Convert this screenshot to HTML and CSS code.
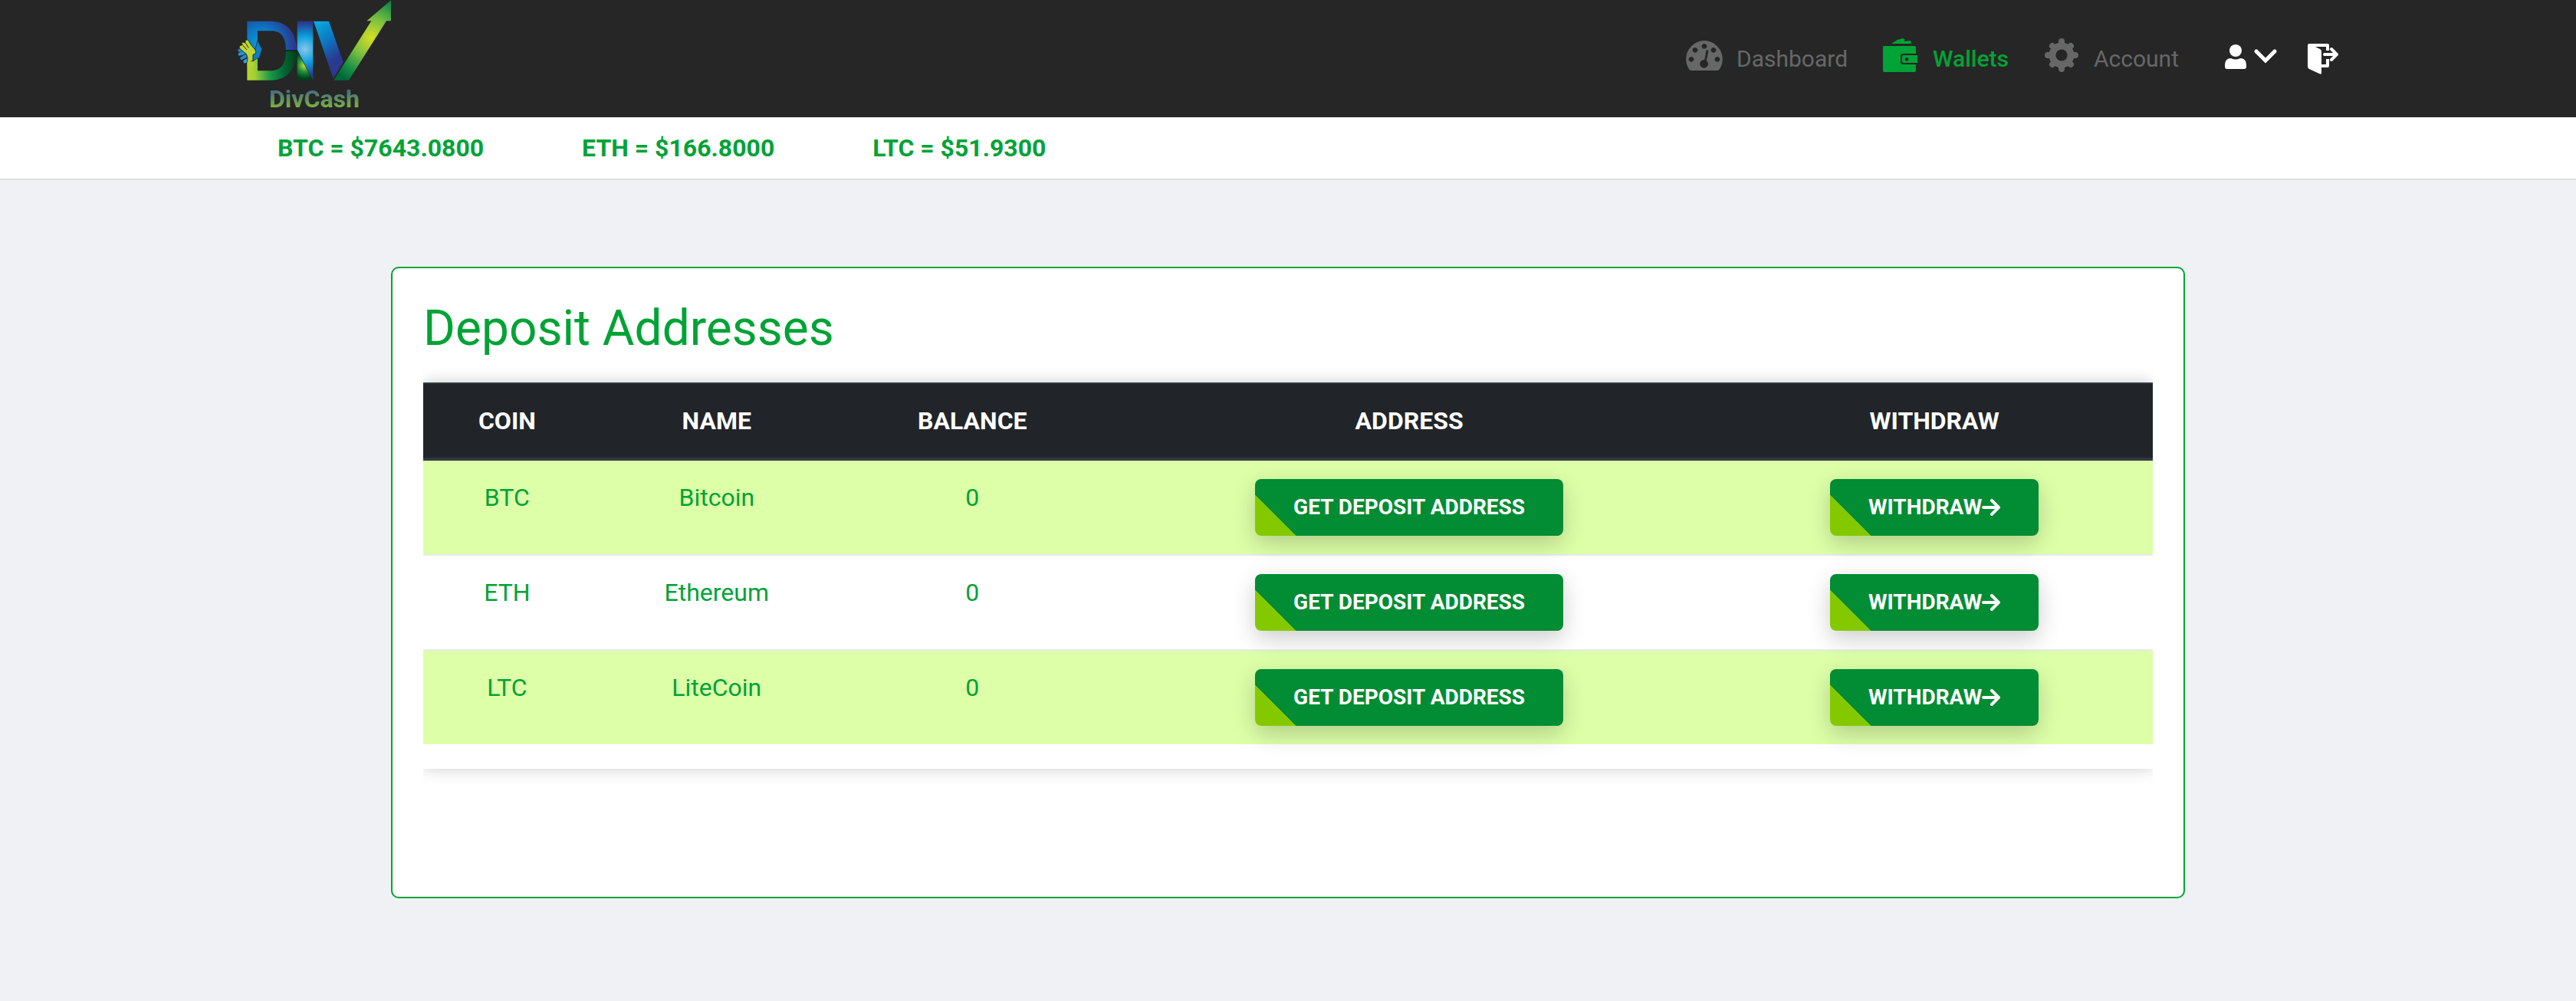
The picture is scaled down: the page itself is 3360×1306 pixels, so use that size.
FILE: index.html
```html
<!DOCTYPE html>
<html lang="en">
<head>
<meta charset="utf-8">
<title>DivCash - Wallets</title>
<link rel="stylesheet" href="styles.css">
</head>
<body>
<svg class="sprite" aria-hidden="true">
  <symbol id="arrow" viewBox="0 0 24 24">
    <path d="M2 12H21M13 3L22 12L13 21" fill="none" stroke="currentColor" stroke-width="4" stroke-linecap="round" stroke-linejoin="miter"/>
  </symbol>
</svg>

<header class="header">
  <div class="container header-row">
    <a class="logo" href="#" aria-label="DivCash">
      <svg viewBox="60 0 600 459" width="200" height="153" aria-hidden="true">
        <defs>
          <radialGradient id="dTop" gradientUnits="userSpaceOnUse" cx="150" cy="175" r="130">
            <stop offset="0" stop-color="#0b9ddb"/><stop offset=".5" stop-color="#0c78c4"/><stop offset="1" stop-color="#2b3990"/>
          </radialGradient>
          <linearGradient id="dBottom" gradientUnits="userSpaceOnUse" x1="97" y1="260" x2="290" y2="250">
            <stop offset="0" stop-color="#b8d532"/><stop offset=".15" stop-color="#a0cf38"/><stop offset=".45" stop-color="#1c9a48"/><stop offset=".75" stop-color="#006634"/><stop offset="1" stop-color="#00401b"/>
          </linearGradient>
          <radialGradient id="iTop" gradientUnits="userSpaceOnUse" cx="323" cy="193" r="105">
            <stop offset="0" stop-color="#8ac6ee"/><stop offset=".5" stop-color="#0a9fdc"/><stop offset="1" stop-color="#2b3990"/>
          </radialGradient>
          <radialGradient id="iBottom" gradientUnits="userSpaceOnUse" cx="322" cy="256" r="52">
            <stop offset="0" stop-color="#d7df23"/><stop offset=".5" stop-color="#1c8f3e"/><stop offset="1" stop-color="#00401b"/>
          </radialGradient>
          <linearGradient id="vLeft" x1=".2" y1="0" x2=".6" y2="1">
            <stop offset="0" stop-color="#06a7df"/><stop offset=".4" stop-color="#0d74c0"/><stop offset=".75" stop-color="#2b3990"/><stop offset="1" stop-color="#2b3990"/>
          </linearGradient>
          <radialGradient id="vArrow" gradientUnits="userSpaceOnUse" cx="582" cy="148" r="190">
            <stop offset="0" stop-color="#d7df23"/><stop offset=".4" stop-color="#7dbf40"/><stop offset=".75" stop-color="#1b8f47"/><stop offset="1" stop-color="#006838"/>
          </radialGradient>
          <linearGradient id="wordmark" x1="0" y1="0" x2="0" y2="1">
            <stop offset=".2" stop-color="#456a80"/><stop offset=".8" stop-color="#7cb342"/>
          </linearGradient>
        </defs>
        <path d="M97 83H192C253 83 291 128 291 197H249C249 148 232 121 192 121H138V160L155 192L146 226L118 240L97 158Z" fill="url(#dTop)"/>
        <path d="M97 200L138 226V277H190C230 277 249 250 249 199H291C291 270 255 314 192 314H97Z" fill="url(#dBottom)"/>
        <path d="M249 198H293" stroke="#171d22" stroke-width="4"/>
        <path d="M293 83H355V314L293 194Z" fill="url(#iTop)"/>
        <path d="M293 200L354 314H293Z" fill="url(#iBottom)"/>
        <path d="M357 83H417L473 243L434 307Z" fill="url(#vLeft)"/>
        <path d="M436 314L583 82H565L660 1V82H642L495 314Z" fill="url(#vArrow)"/>
        <path d="M138 158L155 192L146 222L118 241L117 205L128 195Z" fill="#0d7fc9" stroke="#171d22" stroke-width="2"/>
        <g stroke-width="12" stroke-linecap="round" fill="none">
          <path d="M67 197L76 202" stroke="#2b7bc9"/><path d="M68 212L84 208" stroke="#169bdc"/><path d="M76 228L91 220" stroke="#2b86d4"/><path d="M88 241L97 235" stroke="#28a8e0"/>
        </g>
        <path d="M103 160C98 152 88 157 90 165L86 168C80 162 74 167 78 174L74 178C66 178 64 186 70 192L94 212Q102 224 98 244L120 238V214L130 210Q134 204 128 194L114 178Z" fill="#bfd730" stroke="#20262c" stroke-width="3"/>
        <path d="M90 167L102 186M79 176L95 194" stroke="#20262c" stroke-width="3" stroke-linecap="round"/>
        <path d="M98 240H119V262H98Z" fill="#b4d334"/>
        <text class="wordmark" x="183" y="420" fill="url(#wordmark)">DivCash</text>
      </svg>
    </a>

    <nav class="nav">
      <div class="nav-links">
        <a class="nav-link" href="#">
          <svg class="nav-icon" viewBox="0 0 48 48" aria-hidden="true"><path fill="currentColor" fill-rule="evenodd" d="M24 5A24 24 0 0 1 44 42Q43 44 41 44H7Q5 44 4 42A24 24 0 0 1 24 5ZM24 9a3.4 3.4 0 1 0 .01 0ZM12 14a3.4 3.4 0 1 0 .01 0ZM36 14a3.4 3.4 0 1 0 .01 0ZM7 26a3.4 3.4 0 1 0 .01 0ZM41 26a3.4 3.4 0 1 0 .01 0ZM26.500 17.500L24.300 30A5.400 5.400 0 1 0 26.800 31L29.500 18.500Q28 16 26.500 17.500Z"/></svg>
          <span>Dashboard</span>
        </a>
        <a class="nav-link is-active" href="#">
          <svg class="nav-icon" viewBox="0 0 48 48" aria-hidden="true"><path fill="currentColor" d="M12 9L20 4L27 2L30 4L28 6L37 5L38 9ZM2 12H42Q44 12 44 14V22H27Q24 22 24 25V33Q24 36 27 36H44V44Q44 46 42 46H3Q1 46 1 44V14Q1 12 2 12Z"/><path fill="currentColor" fill-rule="evenodd" d="M28 24H46V34H28Q26 34 26 32V26Q26 24 28 24ZM32 27a2.300 2.300 0 1 0 .01 0Z"/></svg>
          <span>Wallets</span>
        </a>
        <a class="nav-link" href="#">
          <svg class="nav-icon" viewBox="0 0 48 48" aria-hidden="true">
            <path fill="none" stroke="currentColor" stroke-width="9" d="M24 12A12 12 0 1 1 23.990 12Z"/>
            <path stroke="currentColor" stroke-width="8" stroke-linecap="round" d="M24 6V9M24 39V42M6 24H9M39 24H42M12 12L14 14M34 34L36 36M12 36L14 34M34 14L36 12"/>
          </svg>
          <span>Account</span>
        </a>
      </div>
      <button class="icon-button user-menu" type="button" aria-label="User menu">
        <svg width="28" height="32" viewBox="0 0 28 32" aria-hidden="true"><circle cx="14" cy="8" r="8" fill="currentColor"/><path fill="currentColor" d="M8 18Q14 21 20 18Q28 18 28 27V29Q28 32 25 32H3Q0 32 0 29V27Q0 18 8 18Z"/></svg>
        <svg width="30" height="20" viewBox="0 0 30 20" aria-hidden="true"><path d="M3 3L15 15L27 3" fill="none" stroke="currentColor" stroke-width="5" stroke-linecap="round"/></svg>
      </button>
      <button class="icon-button" type="button" aria-label="Log out">
        <svg width="40" height="40" viewBox="0 0 40 40" aria-hidden="true"><path fill="currentColor" d="M0 2Q0 0 2 0L16 7Q18 8 18 10V38Q18 41 15 39L2 33Q0 32 0 30Z"/><path fill="none" stroke="currentColor" stroke-width="4" stroke-linejoin="round" d="M2 2H26V9M26 20V29H17"/><path fill="none" stroke="currentColor" stroke-width="4" stroke-linecap="round" d="M22 14H37M31 7L38 14L31 21"/></svg>
      </button>
    </nav>
  </div>
</header>

<div class="ticker">
  <ul class="container ticker-row">
    <li>BTC = $7643.0800</li>
    <li>ETH = $166.8000</li>
    <li>LTC = $51.9300</li>
  </ul>
</div>

<main class="card">
  <h1 class="title">Deposit Addresses</h1>
  <div class="table-clip">
    <div class="table-panel">
      <table class="table">
        <thead>
          <tr><th scope="col">COIN</th><th scope="col">NAME</th><th scope="col">BALANCE</th><th scope="col">ADDRESS</th><th scope="col">WITHDRAW</th></tr>
        </thead>
        <tbody>
          <tr><td>BTC</td><td>Bitcoin</td><td>0</td><td><button class="button" type="button">GET DEPOSIT ADDRESS</button></td><td><button class="button" type="button">WITHDRAW<svg class="button-arrow" aria-hidden="true"><use href="#arrow"/></svg></button></td></tr>
          <tr><td>ETH</td><td>Ethereum</td><td>0</td><td><button class="button" type="button">GET DEPOSIT ADDRESS</button></td><td><button class="button" type="button">WITHDRAW<svg class="button-arrow" aria-hidden="true"><use href="#arrow"/></svg></button></td></tr>
          <tr><td>LTC</td><td>LiteCoin</td><td>0</td><td><button class="button" type="button">GET DEPOSIT ADDRESS</button></td><td><button class="button" type="button">WITHDRAW<svg class="button-arrow" aria-hidden="true"><use href="#arrow"/></svg></button></td></tr>
        </tbody>
      </table>
    </div>
  </div>
</main>
</body>
</html>
```
FILE: styles.css
```css
* {
  box-sizing: border-box;
}

body {
  margin: 0;
  background: #eff1f4;
  color: #00a336;
  font-family: Roboto, "Liberation Sans", sans-serif;
  font-size: 32px;
  line-height: 48px;
}

.sprite {
  display: none;
}

.container {
  width: 100%;
  max-width: 2740px;
  margin: 0 auto;
}

.header {
  background: #262626;
}

.header-row {
  display: flex;
  align-items: center;
  justify-content: space-between;
}

.logo svg {
  display: block;
}

.wordmark {
  font-size: 96px;
  font-weight: 700;
}

.nav {
  display: flex;
  align-items: center;
  gap: 40px;
}

.nav-links {
  display: flex;
  gap: 45px;
}

.nav-link {
  display: flex;
  align-items: center;
  gap: 18px;
  color: #666867;
  font-size: 30px;
  text-decoration: none;
}

.nav-link.is-active {
  color: #00a336;
  font-weight: 500;
}

.nav-icon {
  width: 48px;
  height: 48px;
  margin-bottom: 10px;
}

.icon-button {
  display: flex;
  align-items: center;
  gap: 10px;
  padding: 0;
  border: 0;
  background: none;
  color: #fff;
}

.user-menu {
  padding: 0 0 6px 20px;
}

.ticker {
  background: #fff;
  border-bottom: 2px solid #ddd;
}

.ticker-row {
  display: flex;
  gap: 128px;
  padding: 16px 52px;
  list-style: none;
  font-weight: 700;
}

.card {
  width: calc(100% - 80px);
  max-width: 2340px;
  margin: 113px auto;
  padding: 40px 40px 167px;
  background: #fff;
  border: 2px solid #00a336;
  border-radius: 10px;
}

.title {
  margin: 0 0 32px;
  font-size: 64px;
  font-weight: 400;
  line-height: 77px;
}

.table-clip {
  overflow-x: clip;
}

.table-panel {
  padding-bottom: 32px;
  box-shadow: 0 0 20px rgba(0, 0, 0, .2);
}

.table {
  width: 100%;
  border-spacing: 0;
  text-align: center;
}

.table th,
.table td {
  padding: 24px;
  vertical-align: top;
}

.table th {
  background: #212529;
  border-top: 2px solid #32383e;
  border-bottom: 4px solid #323842;
  color: #fff;
  font-weight: 700;
}

.table tbody tr:nth-child(odd) {
  background: #ddffa8;
}

.table tr + tr td {
  border-top: 2px solid #e8ebee;
}

.button {
  display: inline-flex;
  align-items: center;
  justify-content: center;
  padding: 16px 50px;
  border: 0;
  border-radius: 8px;
  background: linear-gradient(45deg, #84c900 38px, #028c34 38px);
  box-shadow: 0 10px 30px rgba(0, 0, 0, .2);
  color: #fff;
  font: 700 28px/42px Roboto, "Liberation Sans", sans-serif;
  vertical-align: top;
  white-space: nowrap;
}

.button-arrow {
  width: 24px;
  height: 24px;
}
```
